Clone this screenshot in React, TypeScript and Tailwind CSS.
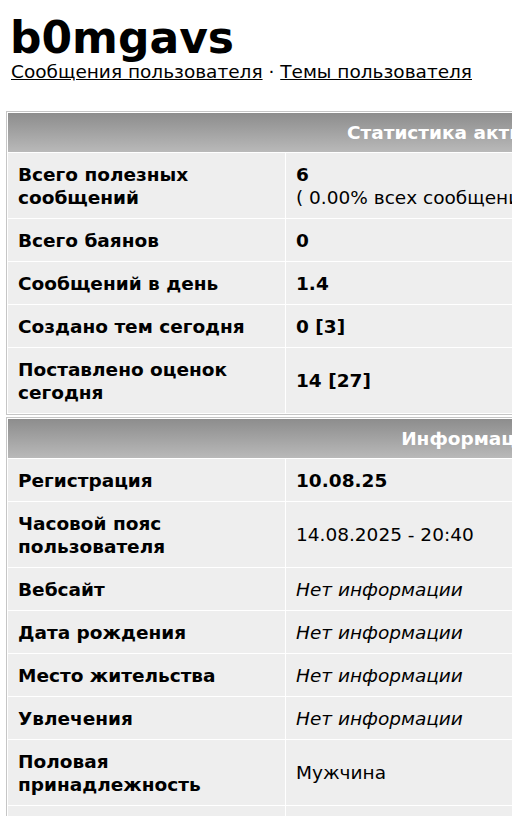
import React from 'react';

type Row = { label: string; value: React.ReactNode };

const stats: Row[] = [
  {
    label: 'Всего полезных сообщений',
    value: (
      <>
        <b>6</b>
        <br />( 0.00% всех сообщений )
      </>
    ),
  },
  { label: 'Всего баянов', value: <b>0</b> },
  { label: 'Сообщений в день', value: <b>1.4</b> },
  { label: 'Создано тем сегодня', value: <b>0 [3]</b> },
  { label: 'Поставлено оценок сегодня', value: <b>14 [27]</b> },
];

const info: Row[] = [
  { label: 'Регистрация', value: <b>10.08.25</b> },
  { label: 'Часовой пояс пользователя', value: '14.08.2025 - 20:40' },
  { label: 'Вебсайт', value: <i>Нет информации</i> },
  { label: 'Дата рождения', value: <i>Нет информации</i> },
  { label: 'Место жительства', value: <i>Нет информации</i> },
  { label: 'Увлечения', value: <i>Нет информации</i> },
  { label: 'Половая принадлежность', value: 'Мужчина' },
  { label: 'Подпись', value: <i>Нет информации</i> },
];

function Section({ title, rows }: { title: string; rows: Row[] }) {
  return (
    <table className="w-[929px] table-fixed border-separate border-spacing-px border border-[#c6c6c6] bg-white">
      <colgroup>
        <col className="w-[277px]" />
        <col />
      </colgroup>
      <thead>
        <tr>
          <th
            colSpan={2}
            className="h-[39px] bg-gradient-to-b from-[#8d8d8d] to-[#b9b9b9] text-center text-[18.5px] font-bold text-white"
          >
            {title}
          </th>
        </tr>
      </thead>
      <tbody>
        {rows.map(r => (
          <tr key={r.label}>
            <td className="bg-[#eeeeee] px-[10px] py-[9.5px] align-middle font-bold">{r.label}</td>
            <td className="bg-[#eeeeee] px-[10px] py-[9.5px] align-middle">{r.value}</td>
          </tr>
        ))}
      </tbody>
    </table>
  );
}

export default function App() {
  return (
    <div className="h-[816px] w-[512px] overflow-hidden bg-white font-['DejaVu_Sans',sans-serif] text-[18.5px] leading-[23px] text-black">
      <div className="px-[6px]">
        <h1 className="mt-[16px] px-[4px] text-[44px] font-bold leading-[44px]">b0mgavs</h1>
        <div className="px-[5px] leading-[23px]">
          <a href="#" className="underline">Сообщения пользователя</a>
          {' · '}
          <a href="#" className="underline">Темы пользователя</a>
        </div>
        <div className="mt-[28px] flex flex-col gap-[2px]">
          <Section title="Статистика активности" rows={stats} />
          <Section title="Информация" rows={info} />
        </div>
      </div>
    </div>
  );
}
